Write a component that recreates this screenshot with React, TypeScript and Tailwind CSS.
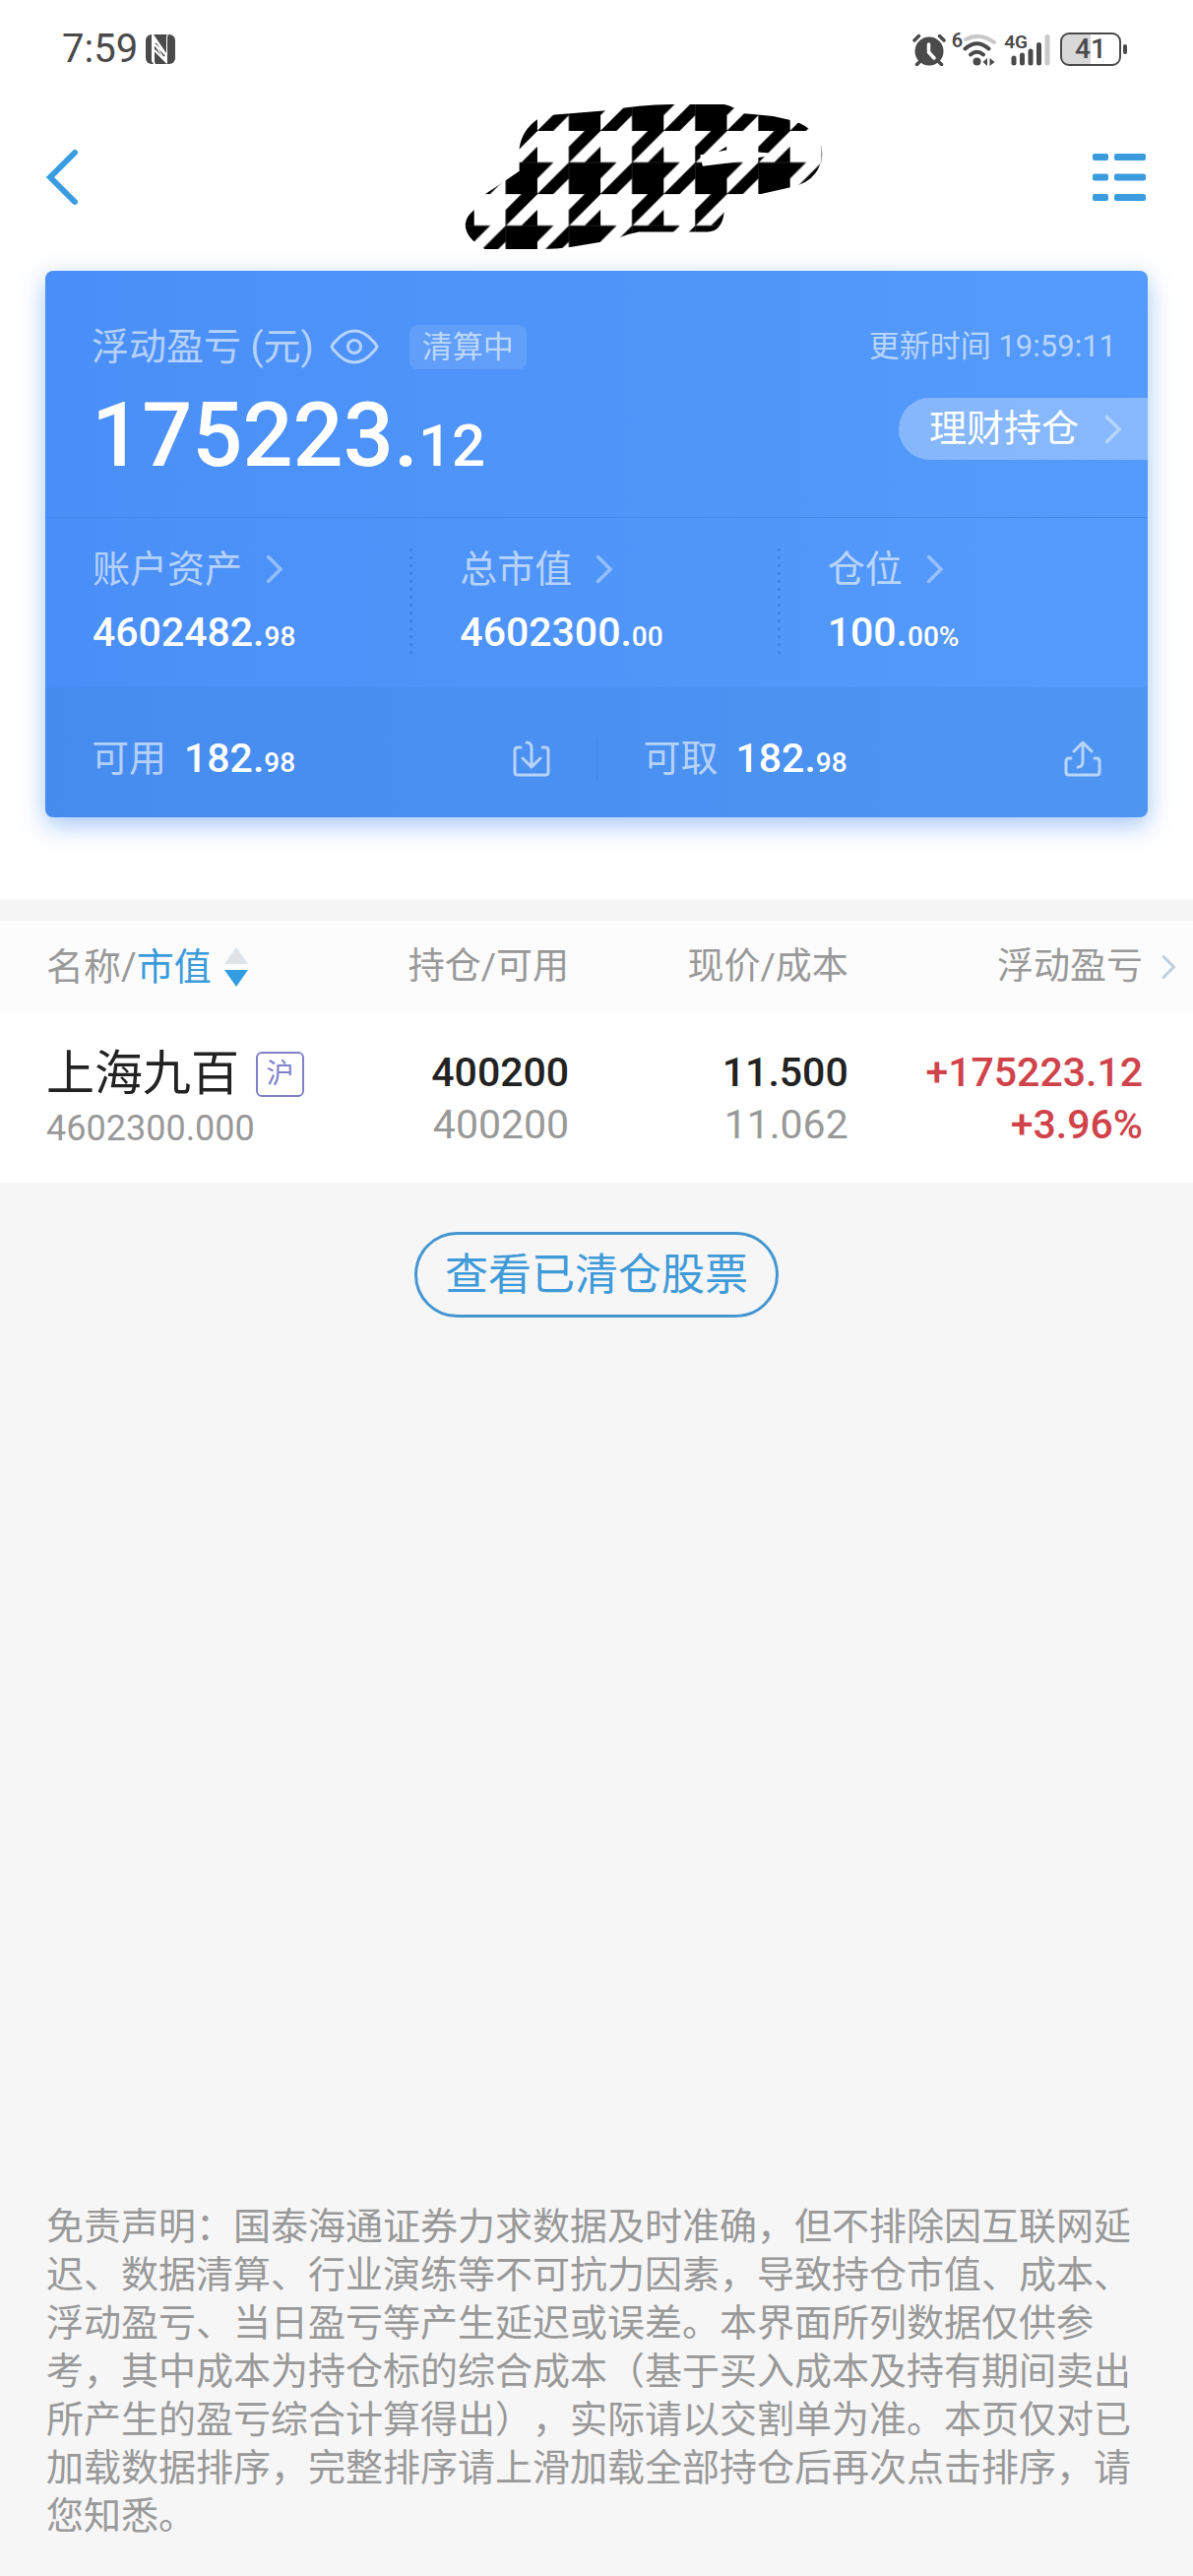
import type { ReactNode } from 'react';
import { clsx } from 'clsx';

const disclaimer =
  '免责声明：国泰海通证券力求数据及时准确，但不排除因互联网延迟、数据清算、行业演练等不可抗力因素，导致持仓市值、成本、浮动盈亏、当日盈亏等产生延迟或误差。本界面所列数据仅供参考，其中成本为持仓标的综合成本（基于买入成本及持有期间卖出所产生的盈亏综合计算得出），实际请以交割单为准。本页仅对已加载数据排序，完整排序请上滑加载全部持仓后再次点击排序，请您知悉。';

interface Stat {
  label: string;
  whole: string;
  fraction: string;
}

const stats: Stat[] = [
  { label: '账户资产', whole: '4602482.', fraction: '98' },
  { label: '总市值', whole: '4602300.', fraction: '00' },
  { label: '仓位', whole: '100.', fraction: '00%' },
];

interface Holding {
  name: string;
  market: string;
  value: string;
  held: string;
  available: string;
  price: string;
  cost: string;
  profit: string;
  profitRate: string;
}

const holdings: Holding[] = [
  {
    name: '上海九百',
    market: '沪',
    value: '4602300.000',
    held: '400200',
    available: '400200',
    price: '11.500',
    cost: '11.062',
    profit: '+175223.12',
    profitRate: '+3.96%',
  },
];

function Chevron({ className }: { className?: string }) {
  return (
    <svg viewBox="0 0 18 30" fill="none" stroke="currentColor" strokeWidth="3.5" strokeLinecap="round" className={clsx('shrink-0', className)}>
      <path d="M2.5 2.5 15 15 2.5 27.5" />
    </svg>
  );
}

function StatusBar() {
  return (
    <div className="flex h-[100px] items-center justify-between pr-[67px] pl-[63px] text-[#4a4a4a]">
      <div className="flex items-center gap-[8px]">
        <span className="text-[40px] leading-[48px]">7:59</span>
        <svg viewBox="0 0 30 30" className="h-[30px] w-[30px]">
          <rect width="30" height="30" rx="6" fill="#4a4a4a" />
          <path d="M6 0h2l13 19V2l1-2h1l-1 3v26l-1 1L9 11v17l1 2H8l-2-3z" fill="#fff" />
          <path d="M10 15l9 13M10 9l9 13" stroke="#4a4a4a" strokeWidth="2" />
          <path d="M9 10l12 11M9 16l12 12" stroke="#fff" strokeWidth="2" />
        </svg>
      </div>

      <div className="flex items-center">
        {/* Alarm */}
        <svg viewBox="0 0 34 33" className="h-[33px] w-[34px]" fill="none" strokeLinecap="round">
          <circle cx="17" cy="18" r="14.500" fill="#4a4a4a" />
          <path d="M2 7l4.500-4.500M32 7l-4.500-4.500M8 28l-3.500 3.500M26 28l3.500 3.500" stroke="#4a4a4a" strokeWidth="3.500" />
          <path d="M16.500 11v8l5.500 6" stroke="#fff" strokeWidth="3.500" strokeLinejoin="round" />
        </svg>

        {/* Wifi 6 */}
        <span className="ml-[6px] self-start text-[20px] leading-[16px] font-semibold">6</span>
        <svg viewBox="0 0 36 33" className="h-[33px] w-[36px]" fill="none" strokeLinecap="round" strokeWidth="4">
          <path d="M3 6Q17.500-1.500 32 9" stroke="#c9c9c9" />
          <path d="M2.500 15.500Q14.500 5 26.500 15.500" stroke="#4a4a4a" />
          <path d="M8 21.500Q14.500 16 21 21.500" stroke="#4a4a4a" />
          <circle cx="14.500" cy="28.500" r="4" fill="#4a4a4a" />
          <path d="M25 25v8l-4.500-4zM27.500 33v-8l5 4z" fill="#4a4a4a" />
        </svg>

        {/* Cellular */}
        <span className="ml-[6px] self-start text-[19px] leading-[20px] font-semibold">4G</span>
        <svg viewBox="0 0 40 33" className="-ml-[17px] h-[33px] w-[40px]" strokeLinecap="round" strokeWidth="5" stroke="#4a4a4a">
          <path d="M3 25v5M11.500 22v8M20 18v12M28.500 11.500V30" />
          <path d="M37 3.500V30" stroke="#c9c9c9" />
        </svg>

        {/* Battery */}
        <div className="ml-[10px] flex h-[34px] w-[62px] items-center justify-center rounded-[9px] border-2 border-[#4a4a4a] bg-linear-to-r from-[#d8d8d8] from-50% to-white to-50% text-[28px] leading-[30px] font-medium">
          41
        </div>
        <div className="ml-[2px] h-[10px] w-[4px] rounded-full bg-[#4a4a4a]" />
      </div>
    </div>
  );
}

function MaskedTitle() {
  return (
    <svg viewBox="57 40 1110 460" className="h-[153px] w-[370px]" aria-hidden="true">
      <defs>
        <pattern id="houndstooth" x="290" y="127" width="193" height="193" patternUnits="userSpaceOnUse">
          <rect width="193" height="193" fill="#fff" />
          <g stroke="#000" strokeWidth="1">
            <path d="M96.500 96.500h96.500v96.500H96.500z" />
            <path d="M144.750 0H193L96.500 96.500V48.250zM193 48.250v48.250h-48.250z" />
            <path d="M0 96.500h48.250L0 144.750zM96.500 96.500v48.250L48.250 193H0z" />
          </g>
        </pattern>
      </defs>
      <path
        d="M290 92Q310 80 335 78L500 65Q600 47 700 46H860Q890 52 915 73L1010 82 1060 93Q1095 100 1118 120 1160 155 1159 200 1157 232 1140 255 1115 290 1060 300L970 320 870 322 860 380Q852 435 810 435H600Q570 440 540 453L480 467 390 482Q350 488 300 488H130Q70 455 70 412 74 385 95 368L130 320 180 287 235 250V180Q243 125 290 92z"
        fill="url(#houndstooth)"
      />
      <path d="M787 200 840 195 868 180 965 192 1000 195 985 205 880 224 795 235z" fill="#fff" />
      <path d="M843 190 866 176 869 185z" />
      <path d="M1157 172Q1162 200 1156 225" fill="none" stroke="#999" strokeWidth="2" />
    </svg>
  );
}

function Amount({ whole, fraction }: { whole: string; fraction: string }) {
  return (
    <span className="text-[41px] leading-[48px] font-medium text-white">
      {whole}
      <span className="text-[28px] leading-none">{fraction}</span>
    </span>
  );
}

function CashRow({ label, action, children }: { label: string; action: string; children: ReactNode }) {
  return (
    <div className="flex flex-1 items-center px-[47px]">
      <span className="mr-[18px] text-[38px] leading-[48px] text-white/60">{label}</span>
      <Amount whole="182." fraction="98" />
      <button type="button" aria-label={action} className="ml-auto text-white/60">
        <svg viewBox="0 0 38 37" className="h-[37px] w-[38px]" fill="none" stroke="currentColor" strokeWidth="3" strokeLinecap="round" strokeLinejoin="round">
          {children}
        </svg>
      </button>
    </div>
  );
}

function AssetCard() {
  return (
    <section className="mx-[46px] mt-[15px] mb-[83px] overflow-clip rounded-[8px] bg-linear-to-r from-[#4a8ff7] to-[#559bfb] shadow-[0_8px_24px_rgba(74,144,247,0.5)]">
      <div className="border-b border-[#4488ea] pt-[50px] pb-[18px] pl-[47px]">
        <div className="flex h-[54px] items-center pr-[32px] text-white/60">
          <span className="text-[38px] leading-[48px]">浮动盈亏 (元)</span>
          <button type="button" aria-label="隐藏金额" className="ml-[16px]">
            <svg viewBox="0 0 50 36" className="h-[36px] w-[50px]" fill="none" stroke="currentColor" strokeWidth="3">
              <path d="M2 18Q3 15 6 12.500 15 2 25 2T44 12.500Q47 15 48 18 47 21 44 23.500 35 34 25 34T6 23.500Q3 21 2 18z" />
              <circle cx="25" cy="18" r="6.500" />
            </svg>
          </button>
          <span className="ml-[31px] flex h-[45px] items-center rounded-[8px] bg-white/10 px-[13px] text-[31px] leading-[45px]">清算中</span>
          <span className="ml-auto text-[31px] leading-[48px]">更新时间 19:59:11</span>
        </div>
        <div className="flex items-start justify-between">
          <div className="text-[90px] leading-[128px] font-medium text-white">
            175223.<span className="text-[60px] leading-none">12</span>
          </div>
          <a href="#wealth" className="mt-[25px] flex h-[63px] items-center rounded-l-full bg-white/30 pr-[26px] pl-[31px] text-[38px] leading-[63px] text-white">
            理财持仓
            <Chevron className="ml-[26px] h-[30px] w-[18px] text-white/40" />
          </a>
        </div>
      </div>

      <div className="grid grid-cols-3 pt-[28px] pb-[32px]">
        {stats.map((stat, index) => (
          <div key={stat.label} className="flex items-center justify-between pl-[48px]">
            <div className="flex flex-col gap-[16px]">
              <a href="#stat" className="flex items-center text-[38px] leading-[48px] text-white/60">
                {stat.label}
                <Chevron className="ml-[24px] h-[30px] w-[18px] text-white/40" />
              </a>
              <Amount whole={stat.whole} fraction={stat.fraction} />
            </div>
            {index < stats.length - 1 && (
              <div className="h-[107px] w-[3px] bg-[repeating-linear-gradient(to_bottom,#3f85ea_0_3px,transparent_3px_8px)]" />
            )}
          </div>
        ))}
      </div>

      <div className="flex h-[132px] items-center bg-[#3c82d8]/25 pt-[12px]">
        <CashRow label="可用" action="转入">
          <path d="M8 7H5Q2 7 2 10V32Q2 35 5 35H33Q36 35 36 32V10Q36 7 33 7H30M14 2Q19 2 19 8V26M10 18l9 9 9-9" />
        </CashRow>
        <div className="h-[43px] w-px bg-[#4285e4]" />
        <CashRow label="可取" action="转出">
          <path d="M7 18H5Q2 18 2 21V32Q2 35 5 35H33Q36 35 36 32V21Q36 18 33 18H31M14 27Q19 27 19 21V3M10 11l9-9 9 9" />
        </CashRow>
      </div>
    </section>
  );
}

function HoldingsTable() {
  return (
    <table className="w-full table-fixed bg-white">
      <thead className="bg-[#fcfcfc] text-[37px] leading-[48px] text-[#999]">
        <tr className="h-[94px]">
          <th className="w-[28.7%] pl-[47px] text-left text-[38px] font-normal">
            <button type="button" className="flex items-center">
              名称/<span className="text-[#3a9bdc]">市值</span>
              <svg viewBox="0 0 24 40" className="ml-[13px] h-[40px] w-[24px]">
                <path d="M12 0 24 17H0z" fill="#dfe3e7" />
                <path d="M12 40 24 23H0z" fill="#339de2" />
              </svg>
            </button>
          </th>
          <th className="w-[19%] text-right font-normal">持仓/可用</th>
          <th className="w-[23.4%] text-right font-normal">现价/成本</th>
          <th className="pr-[17px] font-normal">
            <div className="flex items-center justify-end">
              浮动盈亏
              <Chevron className="ml-[19px] h-[26px] w-[15px] text-[#bcd0e0]" />
            </div>
          </th>
        </tr>
      </thead>
      <tbody>
        {holdings.map((item) => (
          <tr key={item.name} className="h-[172px] text-right align-top text-[41px] leading-[53px] font-medium">
            <td className="pt-[34px] pl-[47px] text-left font-normal">
              <div className="flex items-center text-[49px] leading-[56px] text-[#222]">
                {item.name}
                <span className="ml-[17px] flex h-[46px] w-[49px] items-center justify-center rounded-[6px] border-2 border-[#7f81c8] text-[28px] text-[#7f81c8]">
                  {item.market}
                </span>
              </div>
              <div className="text-[36px] leading-[54px] text-[#999]">{item.value}</div>
            </td>
            <td className="pt-[34px]">
              <div className="text-[#222]">{item.held}</div>
              <div className="font-normal text-[#999]">{item.available}</div>
            </td>
            <td className="pt-[34px]">
              <div className="text-[#222]">{item.price}</div>
              <div className="font-normal text-[#999]">{item.cost}</div>
            </td>
            <td className="pt-[34px] pr-[51px] text-[#d0434a]">
              <div>{item.profit}</div>
              <div>{item.profitRate}</div>
            </td>
          </tr>
        ))}
      </tbody>
    </table>
  );
}

export default function App() {
  return (
    <div className="flex min-h-screen flex-col bg-[#f6f6f6] font-['Roboto','Noto_Sans_CJK_SC',sans-serif]">
      <div className="bg-white">
        <StatusBar />

        <header className="flex h-[160px] items-center justify-between pr-[48px] pl-[46px]">
          <button type="button" aria-label="返回" className="w-[54px]">
            <svg viewBox="0 0 34 58" className="h-[58px] w-[34px]" fill="none" stroke="#3a9cdf" strokeWidth="6" strokeLinecap="round">
              <path d="M30 4 5 29 30 54" />
            </svg>
          </button>
          <div className="flex flex-1 justify-center pl-[96px]">
            <MaskedTitle />
          </div>
          <button type="button" aria-label="菜单">
            <svg viewBox="0 0 54 48" className="h-[48px] w-[54px]" fill="#3a9cdf">
              <rect width="16" height="7" rx="2" />
              <rect x="22" width="32" height="7" rx="2" />
              <rect y="20.500" width="16" height="7" rx="2" />
              <rect x="22" y="20.500" width="32" height="7" rx="2" />
              <rect y="41" width="16" height="7" rx="2" />
              <rect x="22" y="41" width="32" height="7" rx="2" />
            </svg>
          </button>
        </header>

        <AssetCard />
      </div>

      <div className="h-[22px] bg-[#f5f5f5]" />
      <HoldingsTable />

      <button
        type="button"
        className="mt-[50px] mb-[64px] h-[87px] w-[370px] self-center rounded-full border-3 border-[#4596d0] text-[44px] leading-[60px] text-[#3f9ad9]"
      >
        查看已清仓股票
      </button>

      <p className="mt-auto px-[47px] pb-[36px] text-[38px] leading-[49px] text-[#999] [text-spacing-trim:space-all]">{disclaimer}</p>
    </div>
  );
}
